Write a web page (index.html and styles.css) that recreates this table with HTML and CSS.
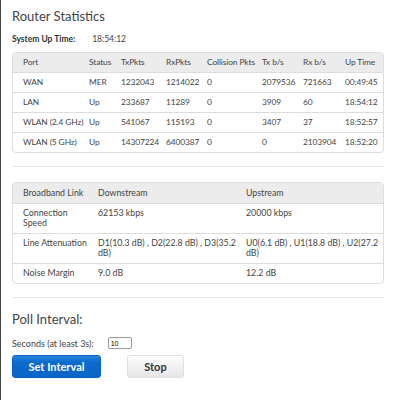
FILE: index.html
```html
<!DOCTYPE html>
<html lang="en">
<head>
    <meta charset="UTF-8">
    <meta name="viewport" content="width=device-width, initial-scale=1.0">
    <title>Router Statistics</title>
    <link rel="stylesheet" href="styles.css">
</head>
<body>
    <div class="page">
        <h1>Router Statistics</h1>
        <div class="uptime">
            <span class="lbl">System Up Time:</span>
            <span id="sysUptime">18:54:12</span>
        </div>

        <div class="tbox">
            <table class="stats ports">
                <colgroup>
                    <col class="c-port">
                    <col class="c-status">
                    <col class="c-txp">
                    <col class="c-rxp">
                    <col class="c-coll">
                    <col class="c-tx">
                    <col class="c-rx">
                    <col class="c-up">
                </colgroup>
                <thead>
                    <tr>
                        <th>Port</th><th>Status</th><th>TxPkts</th><th>RxPkts</th>
                        <th>Collision Pkts</th><th>Tx b/s</th><th>Rx b/s</th><th>Up Time</th>
                    </tr>
                </thead>
                <tbody>
                    <tr><td>WAN</td><td>MER</td><td>1232043</td><td>1214022</td><td>0</td><td>2079536</td><td>721663</td><td>00:49:45</td></tr>
                    <tr><td>LAN</td><td>Up</td><td>233687</td><td>11289</td><td>0</td><td>3909</td><td>60</td><td>18:54:12</td></tr>
                    <tr><td>WLAN (2.4 GHz)</td><td>Up</td><td>541067</td><td>115193</td><td>0</td><td>3407</td><td>37</td><td>18:52:57</td></tr>
                    <tr><td>WLAN (5 GHz)</td><td>Up</td><td>14307224</td><td>6400387</td><td>0</td><td>0</td><td>2103904</td><td>18:52:20</td></tr>
                </tbody>
            </table>
        </div>

        <div class="sep"></div>

        <div class="tbox">
            <table class="stats dsl">
                <colgroup>
                    <col class="c-name">
                    <col class="c-down">
                    <col class="c-upst">
                </colgroup>
                <thead>
                    <tr><th>Broadband Link</th><th>Downstream</th><th>Upstream</th></tr>
                </thead>
                <tbody>
                    <tr><td>Connection Speed</td><td>62153 kbps</td><td>20000 kbps</td></tr>
                    <tr><td>Line Attenuation</td><td>D1(10.3 dB) , D2(22.8 dB) , D3(35.2 dB)</td><td>U0(6.1 dB) , U1(18.8 dB) , U2(27.2 dB)</td></tr>
                    <tr><td>Noise Margin</td><td>9.0 dB</td><td>12.2 dB</td></tr>
                </tbody>
            </table>
        </div>

        <div class="sep"></div>

        <h2>Poll Interval:</h2>
        <div class="poll">
            <label for="interval">Seconds (at least 3s):</label>
            <input id="interval" type="text" class="stdinput" value="10">
        </div>
        <div class="actions">
            <button class="btn btn-blue">Set Interval</button>
            <button class="btn btn-grey">Stop</button>
        </div>
    </div>
</body>
</html>
```

FILE: styles.css
```css
body {
    margin: 0;
    font-family: Lato, "Liberation Sans", sans-serif;
    color: #444;
    background: #fff;
    border-left: 1px solid #444;
    min-height: 400px;
    box-sizing: border-box;
}
.page {
    padding: 9px 15px 0 11px;
}
h1 {
    font-size: 13px;
    font-weight: normal;
    margin: 0 0 10px 0;
    line-height: 15px;
}
.uptime {
    font-size: 8.5px;
    line-height: 11px;
    margin-bottom: 7px;
}
.uptime .lbl {
    font-weight: bold;
    display: inline-block;
    width: 78px;
    color: #333;
}
.tbox {
    border: 1px solid #ddd;
    border-radius: 4px;
    overflow: hidden;
}
.stats {
    width: 100%;
    border-collapse: collapse;
    table-layout: fixed;
    font-size: 8.4px;
    line-height: 10px;
}
.ports th,
.ports td {
    white-space: nowrap;
    letter-spacing: -0.1px;
}
.stats th {
    background: #ececec;
    font-weight: normal;
    text-align: left;
}
.stats th,
.stats td {
    padding: 4px 4px 5px 4px;
    vertical-align: top;
}
.stats tbody tr {
    border-top: 1px solid #ddd;
}
.stats th:first-child,
.stats td:first-child {
    padding-left: 10px;
}
.c-port { width: 72px; }
.c-status { width: 32px; }
.c-txp { width: 45px; }
.c-rxp { width: 41px; }
.c-coll { width: 55px; }
.c-tx { width: 41px; }
.c-rx { width: 42px; }
.c-up { width: 44px; }
.c-name { width: 81px; }
.c-down { width: 148px; }
.c-upst { width: auto; }
.dsl {
    font-size: 8.8px;
}
.dsl th {
    padding-top: 5px;
    padding-bottom: 5px;
}
.dsl td {
    padding-top: 4px;
    padding-bottom: 5px;
}
.sep {
    height: 1px;
    border-top: 1px solid #e6e6e6;
    margin: 13px 0 14px 0;
}
h2 {
    font-size: 13px;
    font-weight: normal;
    margin: 0 0 11px 0;
    line-height: 13px;
}
.poll {
    font-size: 9px;
    display: flex;
    align-items: center;
    gap: 14px;
    margin-bottom: 6px;
}
.stdinput {
    width: 18px;
    height: 10px;
    padding: 0 2px;
    font-family: "Liberation Sans", sans-serif;
    font-size: 7px;
    border: 1px solid #999;
    border-radius: 2px;
}
.actions {
    display: flex;
    gap: 26px;
}
.btn {
    height: 23px;
    border-radius: 3px;
    font-family: Lato, "Liberation Sans", sans-serif;
    font-weight: bold;
    font-size: 11px;
    cursor: pointer;
}
.btn-blue {
    width: 89px;
    color: #fff;
    border: 1px solid #0a62c0;
    background: linear-gradient(#2a84dd, #0b6bcd 30%, #0a65c6);
}
.btn-grey {
    width: 57px;
    color: #333;
    border: 1px solid #e0e0e0;
    background: linear-gradient(#fff, #f4f4f4 35%, #e6e6e6);
}
```
